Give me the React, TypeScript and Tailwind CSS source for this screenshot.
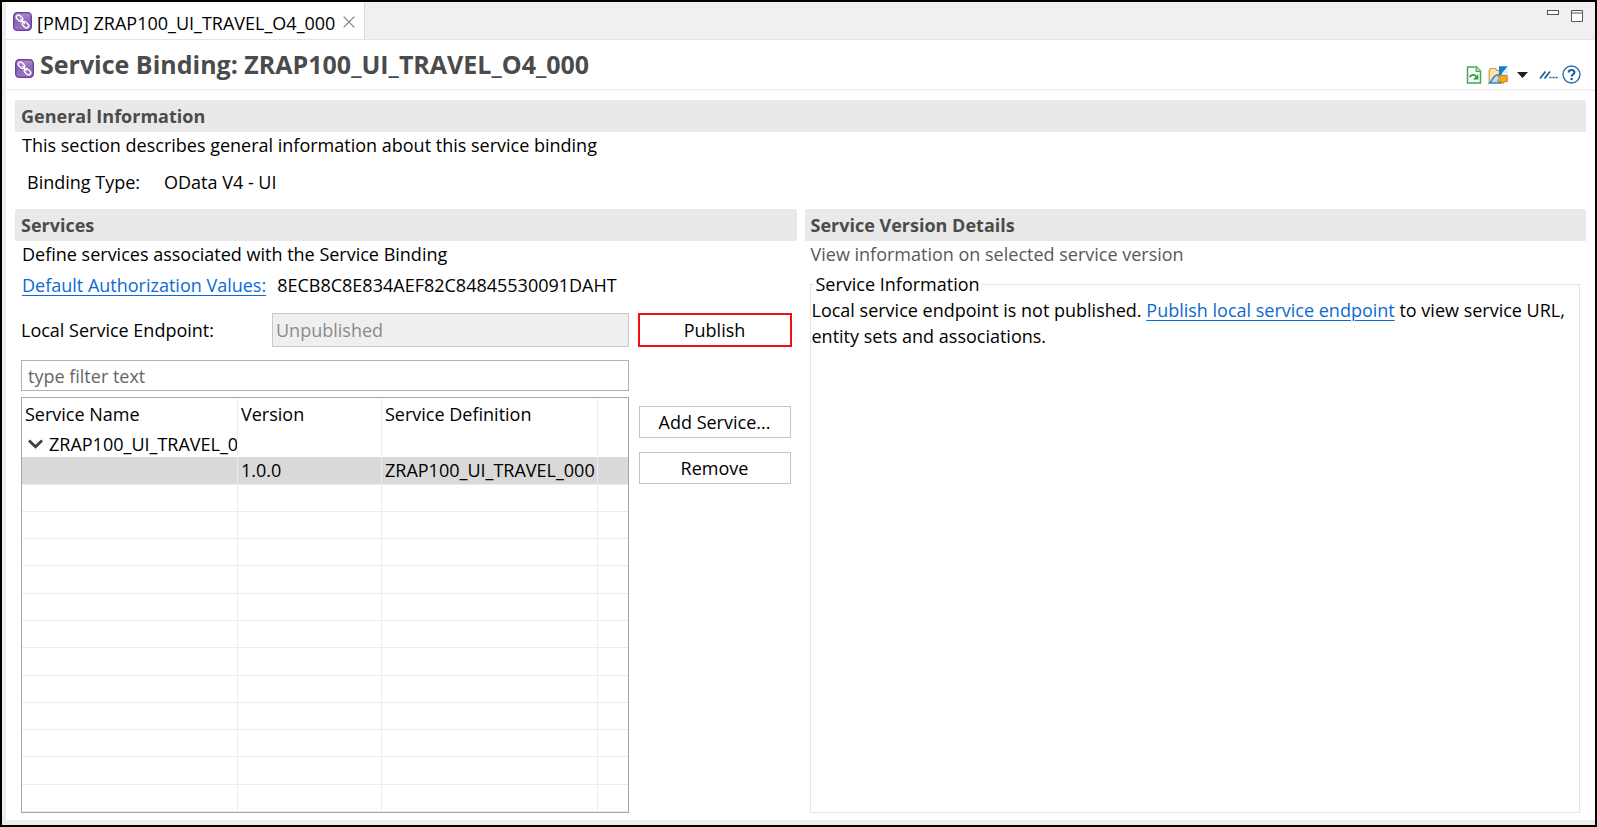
import React from "react";

function BindingIcon() {
  return (
    <svg width="19" height="19" viewBox="0 0 19 19" className="shrink-0" aria-hidden="true">
      <defs>
        <linearGradient id="bindingFill" x1="0" y1="0" x2="0" y2="1">
          <stop offset="0" stopColor="#b08ed0" />
          <stop offset="0.5" stopColor="#8c63b6" />
          <stop offset="1" stopColor="#a27ac6" />
        </linearGradient>
      </defs>
      <rect x="0.75" y="0.75" width="17.5" height="17.5" rx="3.5" fill="url(#bindingFill)" stroke="#6f429f" strokeWidth="1.5" />
      <g fill="none" stroke="#ffffff" strokeWidth="1.4">
        <rect x="2.9" y="4.1" width="7.2" height="4.4" rx="2.2" transform="rotate(45 6.5 6.3)" />
        <rect x="8.9" y="10.5" width="7.2" height="4.4" rx="2.2" transform="rotate(45 12.5 12.7)" />
        <path d="M7.6 7.4l3.9 4" strokeLinecap="round" />
      </g>
    </svg>
  );
}

function RefreshIcon() {
  return (
    <svg width="16" height="18" viewBox="0 0 16 18" aria-hidden="true">
      <path d="M1.5 1h9L14.5 5v12h-13z" fill="#f6fbf6" stroke="#45a559" strokeWidth="1.5" />
      <path d="M10.2 1v4.3h4.3" fill="#cfe8d2" stroke="#45a559" strokeWidth="1.2" />
      <path d="M3.6 11c1.8-2.8 4.8-2.6 6.6-.6" fill="none" stroke="#2c9a44" strokeWidth="1.9" />
      <path d="M12.3 8.2v5.2H7z" fill="#2c9a44" />
    </svg>
  );
}

function FolderIcon() {
  return (
    <svg width="20" height="18" viewBox="0 0 20 18" aria-hidden="true">
      <path d="M1.2 16V4.5l1.5-2h5l1.3 2h4V16z" fill="#fbe3ae" stroke="#d39a45" strokeWidth="1.2" />
      <path d="M1.5 17C4.5 15 5 9.500 9 9h4v8z" fill="#bfe0f7" stroke="#2f86c8" strokeWidth="1.5" />
      <path d="M11 .3h8.800L12.500 9H11z" fill="#0f7fd0" />
      <path d="M19.800 1.500V9h-6.300z" fill="#d9ecf9" />
      <path d="M9.800 9.600h9.400v6.200l-2.400-.4-1.600 2.200-2.400-2.400-2.300 1.300-1-2.200 1.900-1.800z" fill="#f5a91d" stroke="#c5801a" strokeWidth="1" />
    </svg>
  );
}

function LinesIcon() {
  return (
    <svg width="19" height="10" viewBox="0 0 19 10" aria-hidden="true">
      <path d="M1 8.5L6.5 1.5M5.500 8.5L11 1.5" stroke="#1f5f9c" strokeWidth="1.8" />
      <path d="M10.5 7.5h2M13.5 7.5h2M16.5 7.5h2" stroke="#1f5f9c" strokeWidth="1.7" />
    </svg>
  );
}

function HelpIcon() {
  return (
    <svg width="19" height="19" viewBox="0 0 19 19" aria-hidden="true">
      <circle cx="9.5" cy="9.5" r="8.5" fill="#fff" stroke="#2f6ea8" strokeWidth="1.4" />
      <path d="M6.7 7.4c0-3.3 5.7-3.3 5.7 0 0 2-2.8 2-2.8 4.2" fill="none" stroke="#1f5f9c" strokeWidth="2.1" />
      <rect x="8.4" y="12.9" width="2.3" height="2.2" fill="#1f5f9c" />
    </svg>
  );
}

function SectionTitle({ children }: { children: React.ReactNode }) {
  return (
    <h2 className="h-8 shrink-0 rounded-t-xs bg-[#e9e9e9] pl-[6px] text-lg leading-8 font-bold text-[#4b4b4b]">
      {children}
    </h2>
  );
}

function PushButton({ children, marked = false }: { children: React.ReactNode; marked?: boolean }) {
  return (
    <button
      type="button"
      className={
        marked
          ? "h-[34px] w-full border-2 border-[#ee1111] bg-white"
          : "h-8 w-full border border-[#c4c4c4] bg-white"
      }
    >
      {children}
    </button>
  );
}

const emptyRows = Array.from({ length: 12 }, (_, i) => i);
const cell = "border-r border-b border-[#ececec] p-0";
const lastCell = "border-b border-[#ececec] p-0";
const headCell = "border-r border-[#ececec] p-0 pl-[3px] font-normal";

function ServicesTable() {
  return (
    <div className="min-h-0 flex-1 border border-[#a6a6a6]">
      <table className="h-full w-full table-fixed border-separate border-spacing-0 text-left whitespace-nowrap">
        <colgroup>
          <col className="w-[216px]" />
          <col className="w-36" />
          <col className="w-[216px]" />
          <col />
        </colgroup>
        <thead>
          <tr className="h-8">
            <th scope="col" className={headCell}>Service Name</th>
            <th scope="col" className={headCell}>Version</th>
            <th scope="col" className={headCell}>Service Definition</th>
            <td className="p-0" />
          </tr>
        </thead>
        <tbody>
          <tr className="h-[27px]">
            <td className="border-r border-[#ececec] p-0">
              <div className="flex items-center gap-[6px] overflow-hidden pl-[6px]">
                <button type="button" aria-label="Collapse" className="shrink-0">
                  <svg width="15" height="10" viewBox="0 0 15 10" aria-hidden="true">
                    <path d="M1 1.5l6.5 6.2L14 1.5" fill="none" stroke="#404040" strokeWidth="2.8" />
                  </svg>
                </button>
                <span>ZRAP100_UI_TRAVEL_0</span>
              </div>
            </td>
            <td className="border-r border-[#ececec] p-0" />
            <td className="border-r border-[#ececec] p-0" />
            <td className="p-0" />
          </tr>
          <tr className="h-[27px] bg-[#d9d9d9]">
            <td className={cell} />
            <td className={cell}>
              <span className="pl-[3px]">1.0.0</span>
            </td>
            <td className={cell}>
              <span className="pl-[3px]">ZRAP100_UI_TRAVEL_000</span>
            </td>
            <td className={lastCell} />
          </tr>
          {emptyRows.map((row) => (
            <tr key={row} className="h-[27px]">
              <td className={cell} />
              <td className={cell} />
              <td className={cell} />
              <td className={lastCell} />
            </tr>
          ))}
        </tbody>
      </table>
    </div>
  );
}

export default function App() {
  return (
    <div className="flex h-screen min-h-[600px] flex-col border-2 border-black bg-[#ededed] pb-[5px] pl-1 font-['Open_Sans',sans-serif] text-lg leading-[26px] text-black">
      <header className="flex h-[38px] shrink-0 items-stretch justify-between border-b border-[#e4e4e4] bg-[#f0f0f0]">
        <div className="flex items-center border-r border-[#dcdcdc] bg-white pt-[2px] pr-[9px] pl-[7px]">
          <BindingIcon />
          <span className="pt-[3px] pl-[5px]">[PMD] ZRAP100_UI_TRAVEL_O4_000</span>
          <button type="button" aria-label="Close" className="ml-2">
            <svg width="12" height="12" viewBox="0 0 12 12" aria-hidden="true">
              <path d="M.7.7l10.6 10.6M11.3.7L.7 11.3" stroke="#7a7a7a" strokeWidth="1.1" />
            </svg>
          </button>
        </div>
        <div className="flex items-start gap-3 pt-2 pr-3">
          <button type="button" aria-label="Minimize">
            <svg width="12" height="12" viewBox="0 0 12 12" aria-hidden="true">
              <rect x=".5" y=".5" width="11" height="4" fill="#fff" stroke="#555" />
            </svg>
          </button>
          <button type="button" aria-label="Maximize">
            <svg width="12" height="12" viewBox="0 0 12 12" aria-hidden="true">
              <path d="M.5.5h11v11H.5zM.5 3h11" fill="#fff" stroke="#555" />
            </svg>
          </button>
        </div>
      </header>

      <main className="flex min-h-0 flex-1 flex-col bg-white">
        <div className="flex h-[51px] shrink-0 items-center justify-between border-b-2 border-[#f2f2f2] pr-[14px] pl-[9px]">
          <div className="flex items-center gap-[6px]">
            <span className="pt-2">
              <BindingIcon />
            </span>
            <h1 className="pb-[2px] text-[25px] font-bold text-[#4b4b4b]">Service Binding: ZRAP100_UI_TRAVEL_O4_000</h1>
          </div>
          <div className="flex items-center pt-5">
            <button type="button" aria-label="Refresh"><RefreshIcon /></button>
            <button type="button" aria-label="Open" className="ml-[6px]"><FolderIcon /></button>
            <button type="button" aria-label="Open menu" className="ml-[9px]">
              <svg width="11" height="6" viewBox="0 0 11 6" aria-hidden="true">
                <path d="M0 0h11L5.5 6z" fill="#1e1e1e" />
              </svg>
            </button>
            <button type="button" aria-label="More" className="ml-[11px]"><LinesIcon /></button>
            <button type="button" aria-label="Help" className="ml-1"><HelpIcon /></button>
          </div>
        </div>

        <div className="flex min-h-0 flex-1 flex-col px-[9px] pt-[9px] pb-[7px]">
          <section className="shrink-0 pb-[14px]">
            <SectionTitle>General Information</SectionTitle>
            <p className="pl-[7px]">This section describes general information about this service binding</p>
            <dl className="flex gap-6 pt-[11px] pl-3">
              <dt>Binding Type:</dt>
              <dd>OData V4 - UI</dd>
            </dl>
          </section>

          <div className="grid min-h-0 flex-1 grid-cols-2 gap-2">
            <section className="flex min-h-0 flex-col">
              <SectionTitle>Services</SectionTitle>
              <p className="pl-[7px]">Define services associated with the Service Binding</p>
              <div className="flex gap-[11px] pt-[5px] pl-[7px]">
                <a href="#authorization" className="text-[#0d6ad2] underline decoration-1 underline-offset-[3px]">
                  Default Authorization Values:
                </a>
                <span>8ECB8C8E834AEF82C84845530091DAHT</span>
              </div>
              <div className="grid min-h-0 flex-1 grid-cols-[1fr_154px] gap-x-[9px] pt-[15px] pr-[5px] pl-[6px]">
                <div className="flex min-h-0 flex-col">
                  <div className="flex shrink-0 items-center">
                    <label htmlFor="endpoint" className="w-[251px]">Local Service Endpoint:</label>
                    <input
                      id="endpoint"
                      disabled
                      value="Unpublished"
                      className="h-[34px] min-w-0 flex-1 border border-[#c8c8c8] bg-[#efefef] pl-[3px] text-[#8b8b8b]"
                    />
                  </div>
                  <input
                    aria-label="type filter text"
                    placeholder="type filter text"
                    className="mt-[13px] mb-[6px] h-[31px] w-full shrink-0 border border-[#b0b0b0] bg-white pl-[6px] placeholder:text-[#666666]"
                  />
                  <ServicesTable />
                </div>
                <div className="flex flex-col">
                  <PushButton marked>Publish</PushButton>
                  <div className="flex flex-col gap-[14px] px-px pt-[59px]">
                    <PushButton>Add Service...</PushButton>
                    <PushButton>Remove</PushButton>
                  </div>
                </div>
              </div>
            </section>

            <section className="flex min-h-0 flex-col">
              <SectionTitle>Service Version Details</SectionTitle>
              <p className="pl-[6px] text-[#595959]">View information on selected service version</p>
              <fieldset className="mt-1 mr-[6px] ml-[5px] min-h-0 flex-1 border border-[#e4e4e4] pl-px">
                <legend className="ml-[2px] px-[2px]">Service Information</legend>
                <p>
                  Local service endpoint is not published.{" "}
                  <a href="#publish" className="text-[#0d6ad2] underline decoration-1 underline-offset-[3px]">
                    Publish local service endpoint
                  </a>{" "}
                  to view service URL, entity sets and associations.
                </p>
              </fieldset>
            </section>
          </div>
        </div>
      </main>
    </div>
  );
}
